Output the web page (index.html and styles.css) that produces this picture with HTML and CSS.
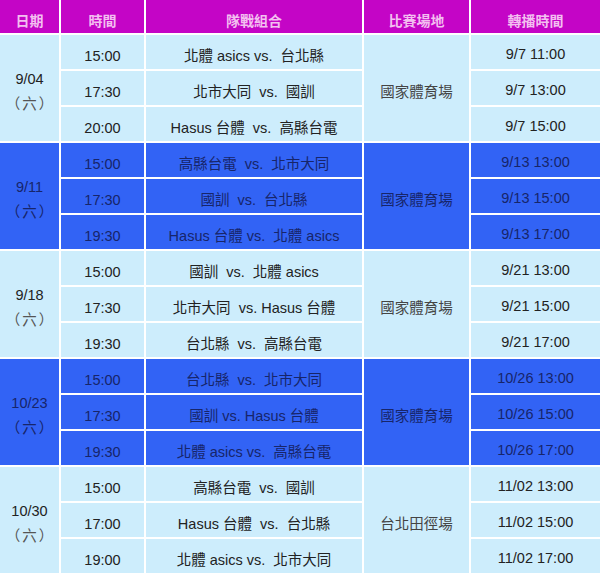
FILE: index.html
```html
<!DOCTYPE html>
<html lang="zh-Hant">
<head>
<meta charset="utf-8">
<link rel="stylesheet" href="styles.css">
</head>
<body>
<div class="sched">
  <div class="hd">日期</div>
  <div class="hd">時間</div>
  <div class="hd">隊戰組合</div>
  <div class="hd">比賽場地</div>
  <div class="hd">轉播時間</div>

  <div class="c date span3"><span>9/04</span><span class="wd">（六）</span></div>
  <div class="c time">15:00</div>
  <div class="c match">北體 asics vs.  台北縣</div>
  <div class="c venue span3">國家體育場</div>
  <div class="c tv">9/7 11:00</div>
  <div class="c time">17:30</div>
  <div class="c match">北市大同  vs.  國訓</div>
  <div class="c tv">9/7 13:00</div>
  <div class="c time">20:00</div>
  <div class="c match">Hasus 台體  vs.  高縣台電</div>
  <div class="c tv">9/7 15:00</div>

  <div class="c dk date span3"><span>9/11</span><span class="wd">（六）</span></div>
  <div class="c dk time">15:00</div>
  <div class="c dk match">高縣台電  vs.  北市大同</div>
  <div class="c dk venue span3">國家體育場</div>
  <div class="c dk tv">9/13 13:00</div>
  <div class="c dk time">17:30</div>
  <div class="c dk match">國訓  vs.  台北縣</div>
  <div class="c dk tv">9/13 15:00</div>
  <div class="c dk time">19:30</div>
  <div class="c dk match">Hasus 台體 vs.  北體 asics</div>
  <div class="c dk tv">9/13 17:00</div>

  <div class="c date span3"><span>9/18</span><span class="wd">（六）</span></div>
  <div class="c time">15:00</div>
  <div class="c match">國訓  vs.  北體 asics</div>
  <div class="c venue span3">國家體育場</div>
  <div class="c tv">9/21 13:00</div>
  <div class="c time">17:30</div>
  <div class="c match">北市大同  vs. Hasus 台體</div>
  <div class="c tv">9/21 15:00</div>
  <div class="c time">19:30</div>
  <div class="c match">台北縣  vs.  高縣台電</div>
  <div class="c tv">9/21 17:00</div>

  <div class="c dk date span3"><span>10/23</span><span class="wd">（六）</span></div>
  <div class="c dk time">15:00</div>
  <div class="c dk match">台北縣  vs.  北市大同</div>
  <div class="c dk venue span3">國家體育場</div>
  <div class="c dk tv">10/26 13:00</div>
  <div class="c dk time">17:30</div>
  <div class="c dk match">國訓 vs. Hasus 台體</div>
  <div class="c dk tv">10/26 15:00</div>
  <div class="c dk time">19:30</div>
  <div class="c dk match">北體 asics vs.  高縣台電</div>
  <div class="c dk tv">10/26 17:00</div>

  <div class="c date span3"><span>10/30</span><span class="wd">（六）</span></div>
  <div class="c time">15:00</div>
  <div class="c match">高縣台電  vs.  國訓</div>
  <div class="c venue span3">台北田徑場</div>
  <div class="c tv">11/02 13:00</div>
  <div class="c time">17:00</div>
  <div class="c match">Hasus 台體  vs.  台北縣</div>
  <div class="c tv">11/02 15:00</div>
  <div class="c time">19:00</div>
  <div class="c match">北體 asics vs.  北市大同</div>
  <div class="c tv">11/02 17:00</div>
</div>
</body>
</html>
```
FILE: styles.css
```css
html, body {
  margin: 0;
  padding: 0;
  background: #ffffff;
}

.sched {
  display: grid;
  grid-template-columns: 59px 83px 216px 105px 129px;
  grid-template-rows: 33px repeat(15, 34px);
  gap: 2px;
  width: 600px;
  background: #ffffff;
  font-family: "Liberation Sans", "Noto Sans CJK TC", sans-serif;
  font-size: 14.5px;
}

.hd {
  background: #c405c6;
  color: #f3bff0;
  font-weight: bold;
  font-size: 14px;
  display: flex;
  align-items: center;
  justify-content: center;
  padding-top: 6px;
  box-sizing: border-box;
}

.c {
  background: #cdedfc;
  color: #222222;
  display: flex;
  align-items: center;
  justify-content: center;
  box-sizing: border-box;
  white-space: pre;
}

.c.dk {
  background: #3263f5;
  color: #17256a;
}

.span3 {
  grid-row: span 3;
}

.date {
  flex-direction: column;
  line-height: 24px;
  padding-top: 6px;
}

.wd {
  font-family: "Noto Sans CJK TC", sans-serif;
  text-spacing-trim: space-all;
  letter-spacing: 2px;
  padding-left: 2px;
  color: #555555;
}

.dk .wd {
  color: #17256a;
}

.time {
  padding-top: 8px;
}

.match {
  padding-top: 5px;
}

.venue {
  padding-top: 5px;
}

.c.venue:not(.dk) {
  color: #444444;
}

.tv {
  padding-top: 3px;
}
```
